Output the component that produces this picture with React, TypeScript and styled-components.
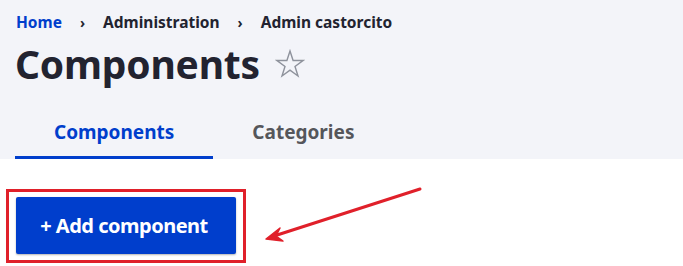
import styled, { createGlobalStyle } from "styled-components";

const GlobalStyle = createGlobalStyle`
  body {
    margin: 0;
    background: #ffffff;
    font-family: "Noto Sans", "Open Sans", sans-serif;
  }
`;

const Page = styled.div`
  position: relative;
  width: 683px;
  height: 266px;
  overflow: hidden;
`;

const Header = styled.header`
  background: #f3f4f9;
  padding: 11px 15px 0;
`;

const Breadcrumb = styled.nav`
  display: flex;
  align-items: center;
  gap: 14px;
  font-size: 15.5px;
  font-weight: 700;
  color: #222330;
  height: 22px;
  padding-left: 1px;
`;

const Crumb = styled.span<{ $link?: boolean }>`
  color: ${(p) => (p.$link ? "#003ecc" : "#222330")};
`;

const Sep = styled.span`
  font-size: 14px;
  padding: 0 4px;
`;

const TitleRow = styled.div`
  display: flex;
  align-items: center;
  gap: 15px;
  margin-top: 4px;
  height: 54px;
`;

const Title = styled.h1`
  margin: 0;
  font-size: 39px;
  font-weight: 700;
  color: #222330;
  line-height: 54px;
  letter-spacing: -0.2px;
`;

const Tabs = styled.div`
  display: flex;
  margin-top: 15px;
`;

const Tab = styled.div<{ $active?: boolean }>`
  height: 53px;
  box-sizing: border-box;
  display: flex;
  align-items: center;
  justify-content: center;
  padding: 2px 39px 0;
  font-size: 19px;
  font-weight: 700;
  color: ${(p) => (p.$active ? "#003ecc" : "#55565b")};
  border-bottom: 3px solid ${(p) => (p.$active ? "#003ecc" : "transparent")};
`;

const Content = styled.main`
  padding: 30px 6px 0;
`;

const Highlight = styled.div`
  display: inline-block;
  border: 3px solid #e0202a;
  padding: 5px 7px 6px;
`;

const PrimaryButton = styled.button`
  width: 220px;
  height: 57px;
  border: none;
  border-radius: 2px;
  background: #003ecc;
  color: #ffffff;
  font-family: "Noto Sans", "Open Sans", sans-serif;
  font-size: 20px;
  font-weight: 700;
  box-shadow: 0 1px 2px rgba(0, 0, 0, 0.3);
  letter-spacing: -0.5px;
  padding: 0 4px 0 0;
`;

const Arrow = styled.svg`
  position: absolute;
  left: 0;
  top: 0;
  pointer-events: none;
`;

export default function App() {
  return (
    <Page>
      <GlobalStyle />
      <Header>
        <Breadcrumb>
          <Crumb $link>Home</Crumb>
          <Sep>›</Sep>
          <Crumb>Administration</Crumb>
          <Sep>›</Sep>
          <Crumb>Admin castorcito</Crumb>
        </Breadcrumb>
        <TitleRow>
          <Title>Components</Title>
          <svg width="30" height="30" viewBox="0 0 30 30">
            <path
              d="M15 2 L18.1 11.5 L28 11.5 L20 17.4 L23 27 L15 21.1 L7 27 L10 17.4 L2 11.5 L11.9 11.5 Z"
              fill="none"
              stroke="#8e929c"
              strokeWidth="1.4"
              strokeLinejoin="miter"
            />
          </svg>
        </TitleRow>
        <Tabs>
          <Tab $active>Components</Tab>
          <Tab>Categories</Tab>
        </Tabs>
      </Header>
      <Content>
        <Highlight>
          <PrimaryButton>+ Add component</PrimaryButton>
        </Highlight>
      </Content>
      <Arrow width="683" height="266" viewBox="0 0 683 266">
        <line x1="420" y1="189" x2="274" y2="236" stroke="#e0202a" strokeWidth="3" strokeLinecap="round" />
        <path d="M266 239 L280 228 L276 236 L283 241 Z" fill="#e0202a" stroke="#e0202a" strokeWidth="1.5" strokeLinejoin="round" />
      </Arrow>
    </Page>
  );
}
